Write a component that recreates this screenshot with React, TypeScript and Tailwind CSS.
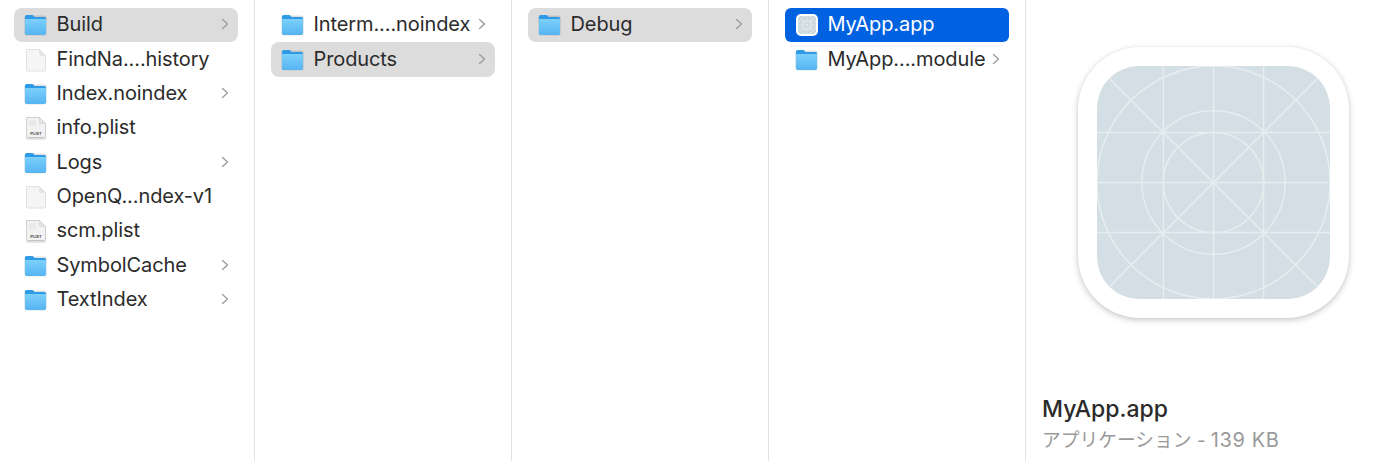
import React from "react";

const FONT = "[font-family:Inter,'Noto_Sans_CJK_JP',sans-serif]";

function Folder({ id }: { id: string }) {
  return (
    <svg width="23" height="22" viewBox="0 0 25 22" preserveAspectRatio="none" className="shrink-0">
      <defs>
        <linearGradient id={id} x1="0" y1="0" x2="0" y2="1">
          <stop offset="0" stopColor="#7cd0fb" />
          <stop offset="1" stopColor="#55b4f2" />
        </linearGradient>
      </defs>
      <rect x="0.5" y="1.5" width="24" height="20" rx="2" fill="#000" opacity="0.12" />
      <path d="M1 3.200C1 1.900 1.800 1 3 1h5.500c1 0 1.400.4 2 1l1 1H22c1.200 0 2 .8 2 2v4H1z" fill="#2f9be6" />
      <path d="M1 6.200c0-.7.5-1.200 1.200-1.200h20.600c.7 0 1.200.5 1.200 1.200V19c0 1.100-.9 2-2 2H3c-1.100 0-2-.9-2-2z" fill={`url(#${id})`} />
    </svg>
  );
}

function Doc({ plist }: { plist?: boolean }) {
  return (
    <svg width="25" height="24" viewBox="0 0 25 24" className="shrink-0">
      <path d="M2.500 1.500h13l6 6V22a1 1 0 0 1-1 1H3.500a1 1 0 0 1-1-1z" fill={plist ? "#f2f2f2" : "#f5f5f5"} stroke={plist ? "#cfcfcf" : "#e2e2e2"} strokeWidth="1" />
      <path d="M15.500 1.500v5a1 1 0 0 0 1 1h5z" fill="#e4e4e4" stroke={plist ? "#cfcfcf" : "#e2e2e2"} strokeWidth="0.6" />
      {plist && (
        <>
          <path d="M5 5h7M5 7h7M5 9h7" stroke="#dcdcdc" strokeWidth="0.8" />
          <path d="M4 21.500h16" stroke="#c4c4c4" strokeWidth="1" />
          <text x="12" y="19" fontSize="4" fontWeight="700" textAnchor="middle" fill="#555" fontFamily="Inter, sans-serif">PLIST</text>
        </>
      )}
    </svg>
  );
}

function AppGrid({ size, tile, line, sw, radius }: { size: number; tile: string; line: string; sw: number; radius: number }) {
  const c = 100;
  return (
    <svg width={size} height={size} viewBox="0 0 200 200" className="block">
      <defs>
        <clipPath id={`clip${size}`}>
          <rect x="0" y="0" width="200" height="200" rx={radius} />
        </clipPath>
      </defs>
      <g clipPath={`url(#clip${size})`}>
        <rect width="200" height="200" fill={tile} />
        <g fill="none" stroke={line} strokeWidth={sw}>
          <circle cx={c} cy={c} r="100" />
          <circle cx={c} cy={c} r="61.500" />
          <circle cx={c} cy={c} r="43" />
          <path d="M57 0V200M100 0V200M143 0V200M0 57H200M0 100H200M0 143H200M0 0L200 200M200 0L0 200" />
        </g>
      </g>
    </svg>
  );
}

function Chevron() {
  return (
    <svg width="8" height="12" viewBox="0 0 8 12" className="mb-[2px] shrink-0">
      <path d="M1.500 1.500L6.500 6L1.500 10.500" fill="none" stroke="#9a9a9a" strokeWidth="1.300" strokeLinecap="round" strokeLinejoin="round" />
    </svg>
  );
}

type Kind = "folder" | "doc" | "plist" | "app";
type Item = { name: string; kind: Kind; selected?: "gray" | "blue" };

function Row({ item, id }: { item: Item; id: string }) {
  const bg = item.selected === "gray" ? "bg-[#dcdcdc] rounded-[8px]" : item.selected === "blue" ? "bg-[#0062e1] rounded-[6px]" : "";
  const color = item.selected === "blue" ? "text-white" : "text-[#2b2b2b]";
  return (
    <div className={`flex h-[34.375px] w-[224px] shrink-0 items-center pl-[10px] pr-[9px] ${bg}`}>
      <div className="flex w-[32.500px] shrink-0 items-center">
        {item.kind === "folder" && <Folder id={id} />}
        {item.kind === "doc" && <Doc />}
        {item.kind === "plist" && <Doc plist />}
        {item.kind === "app" && (
          <div className="ml-[1px] overflow-hidden rounded-[5px] bg-white p-[2px]">
            <AppGrid size={18} tile="#c9d6dc" line="#eef2f4" sw={5} radius={36} />
          </div>
        )}
      </div>
      <span className={`mb-[2px] flex-1 whitespace-nowrap text-[20px] leading-none tracking-[-0.1px] ${color}`}>{item.name}</span>
      {item.kind === "folder" && <Chevron />}
    </div>
  );
}

function Column({ items, idp, w, pl }: { items: Item[]; idp: string; w: string; pl: string }) {
  return (
    <div className={`flex h-full shrink-0 flex-col border-r border-[#e2e2e2] pt-[8px] ${w} ${pl}`}>
      {items.map((it, i) => (
        <Row key={it.name} item={it} id={`${idp}${i}`} />
      ))}
    </div>
  );
}

export default function App() {
  return (
    <div className={`flex h-[461px] w-[1400px] overflow-hidden bg-white ${FONT}`}>
      <Column
        idp="a"
        w="w-[255px]"
        pl="pl-[14px]"
        items={[
          { name: "Build", kind: "folder", selected: "gray" },
          { name: "FindNa....history", kind: "doc" },
          { name: "Index.noindex", kind: "folder" },
          { name: "info.plist", kind: "plist" },
          { name: "Logs", kind: "folder" },
          { name: "OpenQ...ndex-v1", kind: "doc" },
          { name: "scm.plist", kind: "plist" },
          { name: "SymbolCache", kind: "folder" },
          { name: "TextIndex", kind: "folder" },
        ]}
      />
      <Column
        idp="b"
        w="w-[257px]"
        pl="pl-[16px]"
        items={[
          { name: "Interm....noindex", kind: "folder" },
          { name: "Products", kind: "folder", selected: "gray" },
        ]}
      />
      <Column idp="c" w="w-[257px]" pl="pl-[16px]" items={[{ name: "Debug", kind: "folder", selected: "gray" }]} />
      <Column
        idp="d"
        w="w-[257px]"
        pl="pl-[16px]"
        items={[
          { name: "MyApp.app", kind: "app", selected: "blue" },
          { name: "MyApp....module", kind: "folder" },
        ]}
      />
      <div className="flex h-full flex-1 flex-col pl-[16px]">
        <div className="h-[352px] shrink-0 pt-[47px] pl-[36px]">
          <div className="h-[271px] w-[271px] rounded-[62px] bg-white p-[19px] shadow-[0_2px_6px_rgba(0,0,0,0.22),0_0_2px_rgba(0,0,0,0.06)]">
            <AppGrid size={233} tile="#d3dfe5" line="#e6edef" sw={1.3} radius={36} />
          </div>
        </div>
        <div className="mt-[44px] text-[23px] leading-[26px] font-medium text-[#2a2a2a]">MyApp.app</div>
        <div className="mt-[6px] text-[18.750px] leading-[24px] whitespace-nowrap text-[#9a9a9a]">
          アプリケーション - <span className="text-[20px] tracking-[0.6px]">139 KB</span>
        </div>
      </div>
    </div>
  );
}
